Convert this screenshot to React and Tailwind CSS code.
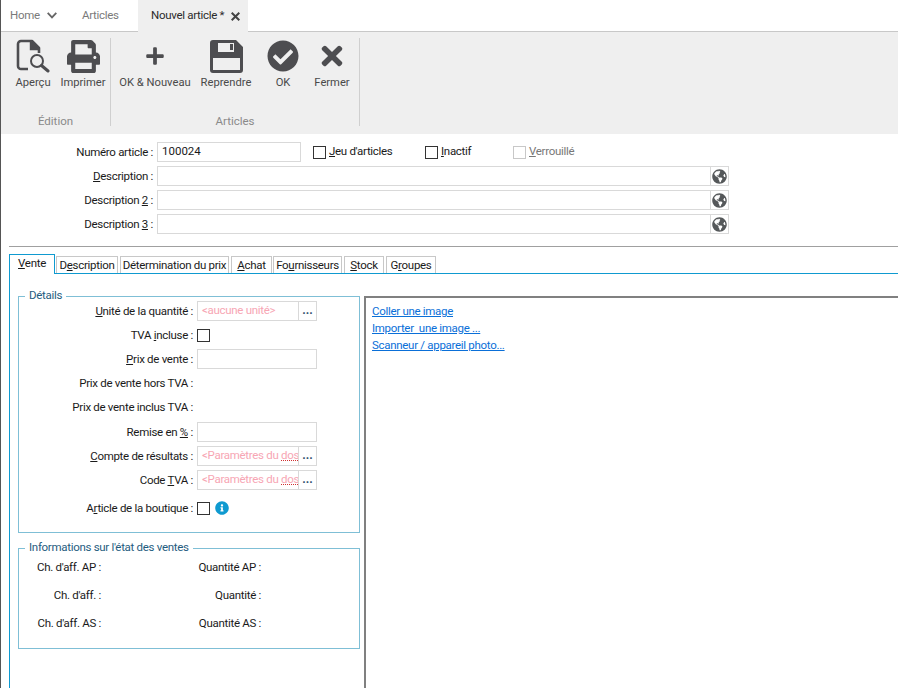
import { FaGlobeAmericas, FaPrint, FaPlus, FaCheckCircle, FaTimes, FaInfoCircle } from 'react-icons/fa'

const font = "[font-family:Roboto,Arial,sans-serif]"

const ToolButton = ({ label, width, children }) => (
  <div className={`${width} flex flex-col items-center`}>
    <div className="h-[36px] flex items-center justify-center">{children}</div>
    <span className="mt-[2px] text-[11.2px] tracking-normal leading-[14px] text-[#4a4a4a] whitespace-nowrap">{label}</span>
  </div>
)

const PreviewIcon = () => (
  <svg width="34" height="34" viewBox="0 0 34 34" fill="none" stroke="#4d4d50" strokeWidth="2.6">
    <path d="M12 30H5a3 3 0 0 1-3-3V5a3 3 0 0 1 3-3h11l7 7v5" strokeLinejoin="round" />
    <path d="M15 2v8h8" strokeWidth="2.4" fill="#4d4d50" />
    <circle cx="21" cy="22" r="6" strokeWidth="2" />
    <path d="M25.5 26.5 32 32" strokeWidth="3" strokeLinecap="round" />
  </svg>
)

const SaveIcon = () => (
  <svg width="33" height="33" viewBox="0 0 33 33">
    <path
      fill="#4d4d50"
      fillRule="evenodd"
      d="M3 0h23l7 7v23a3 3 0 0 1-3 3H3a3 3 0 0 1-3-3V3a3 3 0 0 1 3-3Zm5 3v9h16V3H8Zm12 1h3v6h-3V4ZM3 18v12h27V18H3Z"
    />
  </svg>
)

const Label = ({ children, width = 'w-[193px]' }) => (
  <div className={`${width} shrink-0 text-right text-[11.5px] leading-[14px] text-[#1a1a1a] whitespace-nowrap`}>{children}</div>
)

const Box = ({ width = 'w-[120px]' }) => <div className={`${width} h-[20px] border border-[#d9d9d9] bg-white`} />

const Check = ({ disabled }) => (
  <div className={`w-[13px] h-[13px] border ${disabled ? 'border-[#c8c8c8]' : 'border-[#333333]'} bg-white shrink-0`} />
)

const Picker = ({ children }) => (
  <div className="flex h-[20px] w-[120px] border border-[#d9d9d9] bg-white">
    <div className="w-[100px] overflow-hidden whitespace-nowrap pl-[4px] text-[11.5px] leading-[17px] text-[#f7a6b4]">{children}</div>
    <div className="flex-1 border-l border-[#d9d9d9] text-center text-[12px] tracking-normal leading-[17px] font-bold text-[#33526e]">...</div>
  </div>
)

const DescRow = ({ label }) => (
  <div className="flex items-center h-[20px] mt-[4px]">
    <Label width="w-[152px]">{label}</Label>
    <div className="ml-[4px] flex h-[20px] w-[572px] border border-[#d9d9d9]">
      <div className="flex-1" />
      <div className="w-[18px] border-l border-[#d9d9d9] flex items-center justify-center">
        <FaGlobeAmericas className="text-[#55585a]" size={15} />
      </div>
    </div>
  </div>
)

const Row = ({ label, className = 'mt-[4px]', children }) => (
  <div className={`flex items-center h-[20px] ${className}`}>
    <Label>{label}</Label>
    <div className="ml-[4px] flex items-center">{children}</div>
  </div>
)

const tabs = [
  { w: 'w-[62px] ml-[1px]', label: <>D<u>e</u>scription</> },
  { w: 'w-[109px] ml-[2px]', label: <>Détermination du prix</> },
  { w: 'w-[41px] ml-[2px]', label: <><u>A</u>chat</> },
  { w: 'w-[69px] ml-[1px]', label: <>Fo<u>u</u>rnisseurs</> },
  { w: 'w-[40px] ml-[2px]', label: <><u>S</u>tock</> },
  { w: 'w-[50px] ml-[2px]', label: <>G<u>r</u>oupes</> },
]

const Stat = ({ label, width }) => (
  <div className={`${width} shrink-0 text-right text-[11.5px] leading-[14px] text-[#1a1a1a] whitespace-nowrap`}>{label}</div>
)

export default function App() {
  return (
    <div className={`${font} tracking-[-0.3px] w-[898px] h-[688px] overflow-hidden bg-white border-l border-[#555555]`}>
      {/* Top tabs */}
      <div className="h-[32px] flex border-b border-[#c8c8c8] text-[11.5px]">
        <div className="ml-[9px] w-[128px] flex items-center text-[#7a7a7a]">
          <span className="w-[37px]">Home</span>
          <svg width="10" height="7" viewBox="0 0 10 7" fill="none" stroke="#666" strokeWidth="1.8">
            <path d="M.7.8 5 5.4 9.3.8" />
          </svg>
          <span className="ml-[25px]">Articles</span>
        </div>
        <div className="h-[32px] w-[110px] bg-[#efefef] flex items-center pl-[13px] text-[#2b2b2b] whitespace-nowrap">
          <span className="w-[72px]">Nouvel article *</span>
          <svg className="ml-[8px]" width="9" height="9" viewBox="0 0 9 9" stroke="#444" strokeWidth="2">
            <path d="M.7.7l7.6 7.6M8.3.7.7 8.3" />
          </svg>
        </div>
      </div>

      {/* Toolbar */}
      <div className="h-[102px] bg-[#efefef] flex">
        <div className="w-[110px] mt-[6px] h-[88px] border-r border-[#cfcfcf] flex flex-col">
          <div className="flex pl-[7px] flex-1">
            <ToolButton label="Aperçu" width="w-[50px]"><PreviewIcon /></ToolButton>
            <ToolButton label="Imprimer" width="w-[50px]"><FaPrint className="text-[#4d4d50]" size={33} /></ToolButton>
          </div>
          <div className="text-center text-[11.5px] tracking-normal leading-[14px] text-[#8a8a8a] -mb-[2px]">Édition</div>
        </div>
        <div className="w-[249px] mt-[6px] h-[88px] border-r border-[#cfcfcf] flex flex-col">
          <div className="flex pl-[7px] flex-1">
            <ToolButton label="OK & Nouveau" width="w-[74px]"><FaPlus className="text-[#4d4d50]" size={20} /></ToolButton>
            <ToolButton label="Reprendre" width="w-[68px]"><SaveIcon /></ToolButton>
            <ToolButton label="OK" width="w-[46px]"><FaCheckCircle className="text-[#4d4d50]" size={32} /></ToolButton>
            <ToolButton label="Fermer" width="w-[52px]"><FaTimes className="text-[#4d4d50]" size={30} /></ToolButton>
          </div>
          <div className="text-center text-[11.5px] tracking-normal leading-[14px] text-[#8a8a8a] -mb-[2px]">Articles</div>
        </div>
      </div>

      {/* Article header */}
      <div className="pt-[8px]">
        <div className="flex items-center h-[20px]">
          <Label width="w-[152px]">Numéro article :</Label>
          <div className="ml-[4px] w-[144px] h-[20px] border border-[#d9d9d9] pl-[4px] text-[11.5px] tracking-normal leading-[17px] text-[#1a1a1a]">100024</div>
          <div className="ml-[12px] flex items-center w-[112px] text-[11.5px] text-[#1a1a1a]">
            <Check /><span className="ml-[3px]"><u>J</u>eu d'articles</span>
          </div>
          <div className="flex items-center w-[88px] text-[11.5px] text-[#1a1a1a]">
            <Check /><span className="ml-[3px]"><u>I</u>nactif</span>
          </div>
          <div className="flex items-center text-[11.5px] text-[#777777]">
            <Check disabled /><span className="ml-[3px]"><u>V</u>errouillé</span>
          </div>
        </div>
        <DescRow label={<><u>D</u>escription :</>} />
        <DescRow label={<>Description <u>2</u> :</>} />
        <DescRow label={<>Description <u>3</u> :</>} />
      </div>

      <div className="mt-[12px] ml-[8px] border-t border-[#a0a0a0]" />

      {/* Page tabs */}
      <div className="mt-[7px] ml-[8px] h-[20px] flex items-end border-b border-[#0f9ad0] text-[11.5px] text-[#1a1a1a]">
        <div className="w-[46px] h-[20px] -mb-px bg-white border-t border-l border-r border-[#0f9ad0] text-center leading-[17px]">
          <u>V</u>ente
        </div>
        {tabs.map((tab, i) => (
          <div key={i} className={`${tab.w} h-[17px] border-t border-l border-r border-[#c8c8c8] text-center leading-[16px] whitespace-nowrap`}>
            {tab.label}
          </div>
        ))}
      </div>

      {/* Tab panel */}
      <div className="ml-[8px] h-[414px] border-l border-[#0f9ad0] flex">
        <div className="w-[351px] shrink-0">
          <fieldset className="ml-[8px] mt-[15px] w-[342px] h-[244px] border border-[#7fbfd6]">
            <legend className="ml-[6px] px-[4px] relative -top-[1px] text-[11.5px] leading-[14px] text-[#1f5c80]">Détails</legend>
            <div className="-ml-[19px]">
              <Row className="mt-[-2px]" label={<><u>U</u>nité de la quantité :</>}>
                <Picker>&lt;aucune unité&gt;</Picker>
              </Row>
              <Row label={<>TVA <u>i</u>ncluse :</>}><Check /></Row>
              <Row label={<><u>P</u>rix de vente :</>}><Box /></Row>
              <Row label="Prix de vente hors TVA :" />
              <Row label="Prix de vente inclus TVA :" />
              <Row className="mt-[5px]" label={<>Remise en <u>%</u> :</>}><Box /></Row>
              <Row label={<><u>C</u>ompte de résultats :</>}>
                <Picker>&lt;Paramètres du <span className="underline decoration-dotted decoration-[#d03030]">dos</span>sier&gt;</Picker>
              </Row>
              <Row label={<>Code <u>T</u>VA :</>}>
                <Picker>&lt;Paramètres du <span className="underline decoration-dotted decoration-[#d03030]">dos</span>sier&gt;</Picker>
              </Row>
              <Row className="mt-[8px]" label={<>A<u>r</u>ticle de la boutique :</>}>
                <Check />
                <FaInfoCircle className="ml-[5px] text-[#0f9ad0]" size={14} />
              </Row>
            </div>
          </fieldset>

          <fieldset className="ml-[8px] mt-[8px] w-[342px] h-[108px] border border-[#7fbfd6]">
            <legend className="ml-[6px] px-[4px] relative -top-[1px] text-[11.5px] leading-[14px] text-[#1f5c80]">Informations sur l'état des ventes</legend>
            <div className="-ml-[19px] flex flex-col gap-[14px] mt-[5px]">
              <div className="flex"><Stat width="w-[101px]" label="Ch. d'aff. AP :" /><Stat width="w-[160px]" label="Quantité AP :" /></div>
              <div className="flex"><Stat width="w-[101px]" label="Ch. d'aff. :" /><Stat width="w-[160px]" label="Quantité :" /></div>
              <div className="flex"><Stat width="w-[101px]" label="Ch. d'aff. AS :" /><Stat width="w-[160px]" label="Quantité AS :" /></div>
            </div>
          </fieldset>
        </div>

        {/* Image panel */}
        <div className="ml-[3px] mt-[22px] flex-1 border-l-2 border-t-2 border-[#808080] pl-[6px] pt-[5px] flex flex-col items-start text-[11.5px] leading-[17px] text-[#0a6fd8] underline">
          <span>Coller une image</span>
          <span>Importer&nbsp; une image ...</span>
          <span>Scanneur / appareil photo...</span>
        </div>
      </div>
    </div>
  )
}
